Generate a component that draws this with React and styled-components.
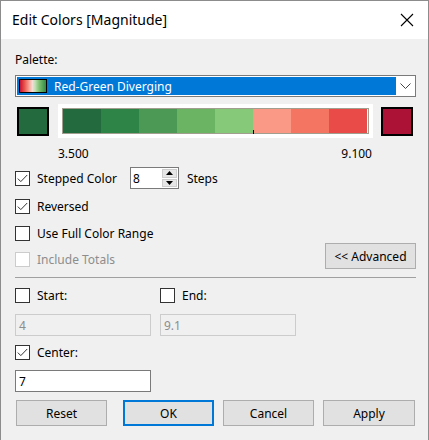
import React from "react";
import styled, { createGlobalStyle, css } from "styled-components";

const Global = createGlobalStyle`
  html, body { margin: 0; padding: 0; background: #f0f0f0; }
  body { font-family: "Noto Sans", "Open Sans", sans-serif; font-size: 12px; color: #000; }
  * { box-sizing: border-box; }
`;

const Window = styled.div`
  width: 429px;
  height: 440px;
  border: 1px solid #8c8c8c;
  border-bottom: none;
  background: #f0f0f0;
  display: flex;
  flex-direction: column;
  overflow: hidden;
`;

const TitleBar = styled.div`
  height: 38px;
  background: #fff;
  display: flex;
  align-items: center;
  justify-content: space-between;
  padding: 0 14px 0 11px;
  flex-shrink: 0;
`;

const Title = styled.div`
  font-size: 14px;
  color: #000;
  padding-bottom: 1px;
`;

const Body = styled.div`
  padding: 13px 12px 0 14px;
  display: flex;
  flex-direction: column;
`;

const Label = styled.div`
  height: 16px;
  line-height: 16px;
  margin-top: ${(p) => p.$mt || 0}px;
  color: ${(p) => (p.$disabled ? "#8d8d8d" : "#000")};
`;

const Select = styled.div`
  margin-top: 7px;
  height: 22px;
  width: 401px;
  border: 1px solid #7a7a7a;
  background: #fff;
  padding: 1px;
  display: flex;
  align-items: stretch;
`;

const Selected = styled.div`
  flex: 1;
  background: #0078d7;
  color: #fff;
  display: flex;
  align-items: center;
  padding-left: 2px;
  gap: 7px;
`;

const PaletteThumb = styled.div`
  width: 28px;
  height: 14px;
  border: 1px solid #000;
  background: linear-gradient(
    to right,
    #c8102e 0%,
    #e9574f 18%,
    #f8a89a 36%,
    #f3dcd4 48%,
    #bfe0b4 58%,
    #7cc06f 74%,
    #2f8a47 100%
  );
`;

const Chevron = styled.div`
  width: 18px;
  display: flex;
  align-items: center;
  justify-content: center;
`;

const ColorRow = styled.div`
  margin-top: 7px;
  display: flex;
  align-items: center;
  height: 34px;
`;

const Swatch = styled.div`
  width: 32px;
  height: 29px;
  border: 2px solid #000;
  background: ${(p) => p.$color};
  margin-left: ${(p) => p.$ml}px;
`;

const BarFrame = styled.div`
  margin-left: 9px;
  background: #fff;
  padding: 4px;
  height: 34px;
  width: 315px;
  position: relative;
`;

const Bar = styled.div`
  display: flex;
  height: 26px;
  border: 1px solid #a19e90;
  width: 307px;
`;

const Step = styled.div`
  width: 38px;
  height: 100%;
  background: ${(p) => p.$color};
`;

const Tick = styled.div`
  position: absolute;
  left: 195px;
  top: 26px;
  width: 1px;
  height: 4px;
  background: #000;
`;

const ValueRow = styled.div`
  margin-top: 8px;
  height: 16px;
  line-height: 16px;
  width: 357px;
  padding-left: 43px;
  display: flex;
  justify-content: space-between;
`;

const CheckRow = styled.div`
  display: flex;
  align-items: center;
  height: ${(p) => p.$h || 16}px;
  margin-top: ${(p) => p.$mt || 0}px;
`;

const Box = styled.div`
  width: 15px;
  height: 15px;
  border: 1px solid ${(p) => (p.$disabled ? "#cccccc" : "#333333")};
  background: #fff;
  display: flex;
  align-items: center;
  justify-content: center;
  flex-shrink: 0;
  margin-left: ${(p) => p.$ml || 0}px;
`;

const CheckText = styled.span`
  margin-left: 7px;
  color: ${(p) => (p.$disabled ? "#8d8d8d" : "#000")};
`;

const Spin = styled.div`
  margin-left: 13px;
  width: 49px;
  height: 22px;
  border: 1px solid #7a7a7a;
  background: #fff;
  display: flex;
  align-items: stretch;
  padding: 1px 1px 1px 2px;
`;

const SpinValue = styled.div`
  flex: 1;
  display: flex;
  align-items: center;
`;

const SpinButtons = styled.div`
  width: 15px;
  display: flex;
  flex-direction: column;
  gap: 1px;
`;

const SpinBtn = styled.div`
  flex: 1;
  background: #e6e6e6;
  border: 1px solid #cdcdcd;
  display: flex;
  align-items: center;
  justify-content: center;
`;

const StepsLabel = styled.span`
  margin-left: 8px;
`;

const SplitRow = styled.div`
  display: flex;
  align-items: flex-end;
  justify-content: space-between;
  width: 401px;
`;

const LeftCol = styled.div`
  display: flex;
  flex-direction: column;
  padding-bottom: 2px;
`;

const Button = styled.div`
  width: ${(p) => p.$w || 91}px;
  height: 26px;
  background: #e1e1e1;
  border: 1px solid #adadad;
  display: flex;
  align-items: center;
  justify-content: center;
  color: #000;
  margin-left: ${(p) => p.$ml || 0}px;
  ${(p) =>
    p.$default &&
    css`
      border: 2px solid #0078d7;
    `}
`;

const Separator = styled.div`
  margin-top: 8px;
  height: 1px;
  width: 401px;
  background: #a0a0a0;
`;

const InputRow = styled.div`
  display: flex;
  margin-top: ${(p) => p.$mt || 0}px;
  gap: 9px;
`;

const Input = styled.div`
  width: 136px;
  height: 22px;
  border: 1px solid ${(p) => (p.$disabled ? "#cccccc" : "#7a7a7a")};
  background: ${(p) => (p.$disabled ? "#f0f0f0" : "#fff")};
  color: ${(p) => (p.$disabled ? "#8d8d8d" : "#000")};
  display: flex;
  align-items: center;
  padding-left: 3px;
`;

const FieldHalf = styled.div`
  display: flex;
  align-items: center;
  width: 136px;
`;

const ButtonRow = styled.div`
  display: flex;
  margin-top: 8px;
  padding-left: 1px;
`;

const Check = () => (
  <svg width="11" height="9" viewBox="0 0 11 9">
    <path d="M0.8 4.6 L3.8 7.6 L10.2 1" fill="none" stroke="#333" strokeWidth="1" />
  </svg>
);

const CheckBox = ({ checked, disabled, ml }) => (
  <Box $disabled={disabled} $ml={ml}>
    {checked && <Check />}
  </Box>
);

const stepColors = [
  "#236a3e",
  "#2e8447",
  "#4c9955",
  "#6bb463",
  "#86c978",
  "#fa9985",
  "#f57563",
  "#e94c48",
];

export default function App() {
  return (
    <>
      <Global />
      <Window>
        <TitleBar>
          <Title>Edit Colors [Magnitude]</Title>
          <svg width="14" height="14" viewBox="0 0 14 14">
            <path d="M1 1 L13 13 M13 1 L1 13" stroke="#000" strokeWidth="1.1" />
          </svg>
        </TitleBar>
        <Body>
          <Label>Palette:</Label>
          <Select>
            <Selected>
              <PaletteThumb />
              <span>Red-Green Diverging</span>
            </Selected>
            <Chevron>
              <svg width="11" height="6" viewBox="0 0 11 6">
                <path d="M0.5 0.5 L5.5 5.5 L10.5 0.5" fill="none" stroke="#444" strokeWidth="1" />
              </svg>
            </Chevron>
          </Select>
          <ColorRow>
            <Swatch $color="#236a3e" $ml={2} />
            <BarFrame>
              <Bar>
                {stepColors.map((c) => (
                  <Step key={c} $color={c} />
                ))}
              </Bar>
              <Tick />
            </BarFrame>
            <Swatch $color="#ab1236" $ml={8} />
          </ColorRow>
          <ValueRow>
            <span>3.500</span>
            <span>9.100</span>
          </ValueRow>
          <CheckRow $h={22} $mt={5}>
            <CheckBox checked />
            <CheckText>Stepped Color</CheckText>
            <Spin>
              <SpinValue>8</SpinValue>
              <SpinButtons>
                <SpinBtn>
                  <svg width="7" height="4" viewBox="0 0 7 4">
                    <path d="M0 4 L3.5 0 L7 4 Z" fill="#000" />
                  </svg>
                </SpinBtn>
                <SpinBtn>
                  <svg width="7" height="4" viewBox="0 0 7 4">
                    <path d="M0 0 L3.5 4 L7 0 Z" fill="#000" />
                  </svg>
                </SpinBtn>
              </SpinButtons>
            </Spin>
            <StepsLabel>Steps</StepsLabel>
          </CheckRow>
          <CheckRow $mt={9}>
            <CheckBox checked />
            <CheckText>Reversed</CheckText>
          </CheckRow>
          <SplitRow>
            <LeftCol>
              <CheckRow $mt={11}>
                <CheckBox />
                <CheckText>Use Full Color Range</CheckText>
              </CheckRow>
              <CheckRow $mt={10}>
                <CheckBox disabled />
                <CheckText $disabled>Include Totals</CheckText>
              </CheckRow>
            </LeftCol>
            <Button $w={91}>&lt;&lt; Advanced</Button>
          </SplitRow>
          <Separator />
          <InputRow $mt={9}>
            <FieldHalf>
              <CheckBox />
              <CheckText>Start:</CheckText>
            </FieldHalf>
            <FieldHalf>
              <CheckBox />
              <CheckText>End:</CheckText>
            </FieldHalf>
          </InputRow>
          <InputRow $mt={10}>
            <Input $disabled>4</Input>
            <Input $disabled>9.1</Input>
          </InputRow>
          <CheckRow $mt={8}>
            <CheckBox checked />
            <CheckText>Center:</CheckText>
          </CheckRow>
          <InputRow $mt={10}>
            <Input>7</Input>
          </InputRow>
          <ButtonRow>
            <Button>Reset</Button>
            <Button $default $ml={16}>OK</Button>
            <Button $ml={9}>Cancel</Button>
            <Button $ml={9} $w={92}>Apply</Button>
          </ButtonRow>
        </Body>
      </Window>
    </>
  );
}
